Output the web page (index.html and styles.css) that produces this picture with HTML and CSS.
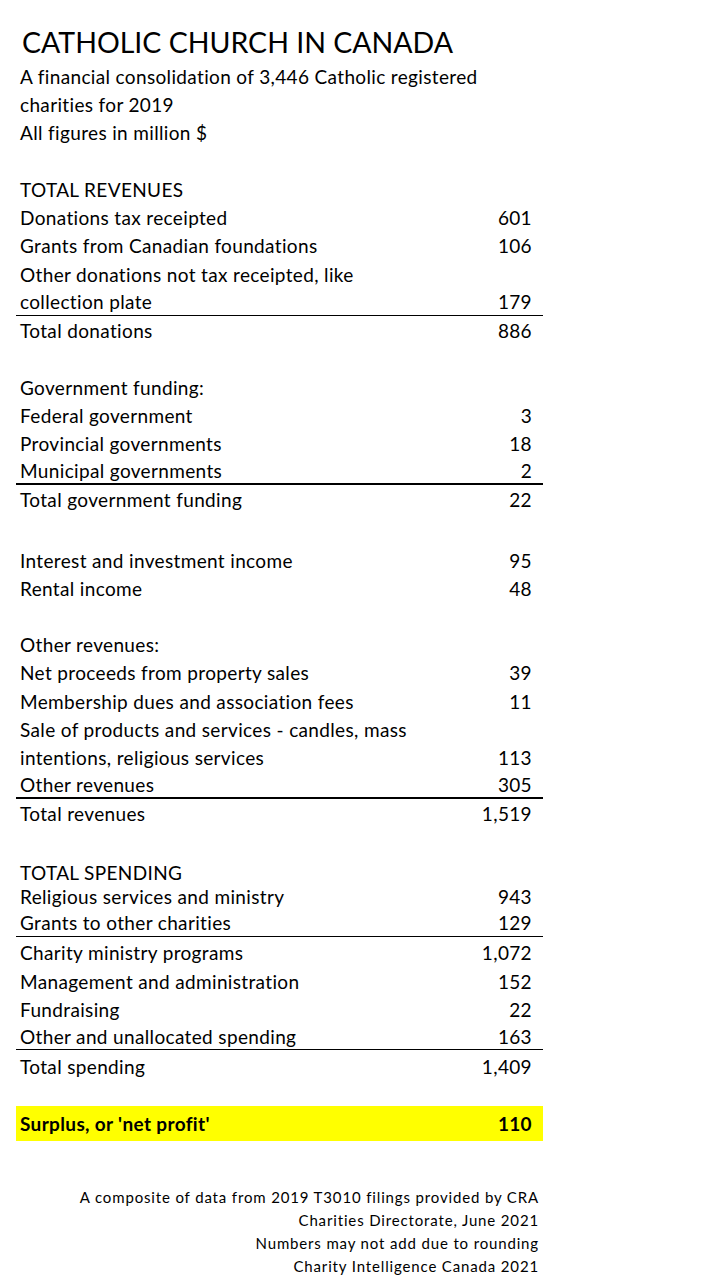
FILE: index.html
```html
<!DOCTYPE html>
<html>
<head>
<meta charset="utf-8">
<link rel="stylesheet" href="styles.css">
</head>
<body>
<div class="page">
  <h1 class="title">CATHOLIC CHURCH IN CANADA</h1>
  <div class="sheet">
    <div class="row"><span>A financial consolidation of 3,446 Catholic registered</span></div>
    <div class="row"><span>charities for 2019</span></div>
    <div class="row"><span>All figures in million $</span></div>
    <div class="row h29"></div>
    <div class="row"><span>TOTAL REVENUES</span></div>
    <div class="row"><span>Donations tax receipted</span><span>601</span></div>
    <div class="row h29"><span>Grants from Canadian foundations</span><span>106</span></div>
    <div class="row"><span>Other donations not tax receipted, like</span></div>
    <div class="row thin"><span>collection plate</span><span>179</span></div>
    <div class="row"><span>Total donations</span><span>886</span></div>
    <div class="row h29"></div>
    <div class="row"><span>Government funding:</span></div>
    <div class="row"><span>Federal government</span><span>3</span></div>
    <div class="row h29"><span>Provincial governments</span><span>18</span></div>
    <div class="row h27 thick"><span>Municipal governments</span><span>2</span></div>
    <div class="row h29"><span>Total government funding</span><span>22</span></div>
    <div class="row h32"></div>
    <div class="row"><span>Interest and investment income</span><span>95</span></div>
    <div class="row"><span>Rental income</span><span>48</span></div>
    <div class="row"></div>
    <div class="row"><span>Other revenues:</span></div>
    <div class="row h29"><span>Net proceeds from property sales</span><span>39</span></div>
    <div class="row"><span>Membership dues and association fees</span><span>11</span></div>
    <div class="row"><span>Sale of products and services - candles, mass</span></div>
    <div class="row"><span>intentions, religious services</span><span>113</span></div>
    <div class="row thick"><span>Other revenues</span><span>305</span></div>
    <div class="row h29"><span>Total revenues</span><span>1,519</span></div>
    <div class="row h32"></div>
    <div class="row h24"><span>TOTAL SPENDING</span></div>
    <div class="row h25"><span>Religious services and ministry</span><span>943</span></div>
    <div class="row thin"><span>Grants to other charities</span><span>129</span></div>
    <div class="row h30"><span>Charity ministry programs</span><span>1,072</span></div>
    <div class="row"><span>Management and administration</span><span>152</span></div>
    <div class="row"><span>Fundraising</span><span>22</span></div>
    <div class="row h27 thin"><span>Other and unallocated spending</span><span>163</span></div>
    <div class="row h32"><span>Total spending</span><span>1,409</span></div>
    <div class="row h24"></div>
    <div class="row surplus"><span>Surplus, or 'net profit'</span><span>110</span></div>
  </div>
  <div class="notes">
    <p>A composite of data from 2019 T3010 filings provided by CRA</p>
    <p>Charities Directorate, June 2021</p>
    <p>Numbers may not add due to rounding</p>
    <p>Charity Intelligence Canada 2021</p>
  </div>
</div>
</body>
</html>
```
FILE: styles.css
```css
html, body {
  margin: 0;
  padding: 0;
  background: #fff;
}
body {
  font-family: Lato, "Open Sans", "Liberation Sans", sans-serif;
  color: #000;
  width: 720px;
  height: 1280px;
  overflow: hidden;
}
.page {
  padding: 22px 0 0 16px;
  width: 527px;
}
.title {
  margin: 0 0 0 6px;
  font-weight: 400;
  font-size: 28.5px;
  line-height: 40px;
  height: 40px;
  letter-spacing: 0;
}
.sheet {
  display: flex;
  flex-direction: column;
}
.row {
  display: flex;
  justify-content: space-between;
  align-items: center;
  height: 28px;
  padding: 0 11px 0 4px;
  font-size: 19px;
  letter-spacing: 0.35px;
  box-sizing: border-box;
  white-space: nowrap;
}
.h24 { height: 24px; }
.h25 { height: 25px; }
.h27 { height: 27px; }
.h29 { height: 29px; }
.h30 { height: 30px; }
.h32 { height: 32px; }
.thin { border-bottom: 1px solid #000; }
.thick { border-bottom: 2px solid #000; }
.surplus {
  height: 35px;
  background: #ffff00;
  font-weight: 700;
}
.notes {
  margin-top: 45px;
  text-align: right;
  padding-right: 4px;
  font-size: 15px;
  line-height: 23px;
  letter-spacing: 0.85px;
}
.notes p { margin: 0; }
```
